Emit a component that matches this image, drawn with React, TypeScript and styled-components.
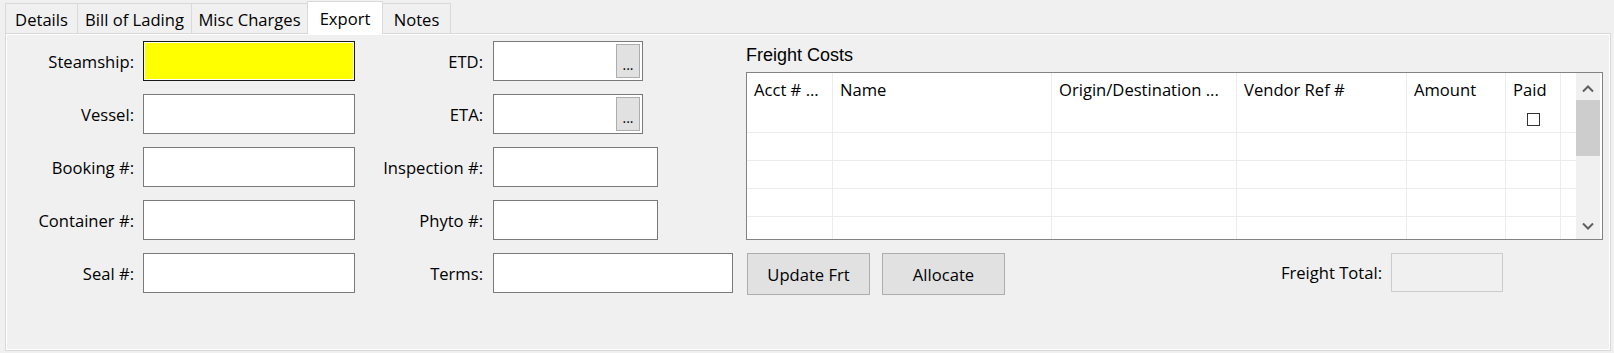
import React from 'react';
import styled, { createGlobalStyle } from 'styled-components';

const GlobalStyle = createGlobalStyle`
  html, body {
    margin: 0;
    padding: 0;
    background: #f0f0f0;
  }
  body {
    font-family: 'Open Sans', 'Noto Sans', sans-serif;
    font-size: 16.6px;
    color: #000;
  }
`;

const Window = styled.div`
  width: 1614px;
  height: 353px;
  box-sizing: border-box;
  padding: 1px 3px 0 5px;
  display: flex;
  flex-direction: column;
`;

const TabStrip = styled.div`
  display: flex;
  align-items: flex-start;
  height: 32px;
`;

const Tab = styled.div<{ $width: number; $active?: boolean }>`
  box-sizing: border-box;
  width: ${p => p.$width}px;
  height: ${p => (p.$active ? 33 : 30)}px;
  margin-top: ${p => (p.$active ? 0 : 2)}px;
  margin-right: -1px;
  padding-top: ${p => (p.$active ? 0 : 2)}px;
  border: 1px solid #d9d9d9;
  border-bottom: none;
  background: ${p => (p.$active ? '#ffffff' : '#f0f0f0')};
  display: flex;
  align-items: center;
  justify-content: center;
  white-space: nowrap;
  position: relative;
  z-index: ${p => (p.$active ? 2 : 1)};
`;

const Panel = styled.div`
  box-sizing: border-box;
  height: 318px;
  border: 1px solid #d9d9d9;
  box-shadow: inset 0 0 0 1px #ffffff;
  background: #f0f0f0;
  display: flex;
  align-items: flex-start;
`;

const FormGrid = styled.div`
  display: grid;
  grid-template-columns: 137px 212px 138px 240px;
  grid-auto-rows: 40px;
  row-gap: 13px;
  padding-top: 7px;
`;

const Label = styled.div<{ $pad: number }>`
  display: flex;
  align-items: center;
  justify-content: flex-end;
  padding-right: ${p => p.$pad}px;
  white-space: nowrap;
`;

const Field = styled.div<{ $width: number; $highlight?: boolean }>`
  box-sizing: border-box;
  width: ${p => p.$width}px;
  height: 40px;
  border: 1px solid ${p => (p.$highlight ? '#1a1a1a' : '#7a7a7a')};
  background: ${p => (p.$highlight ? '#ffff00' : '#ffffff')};
  box-shadow: ${p => (p.$highlight ? 'inset 0 0 0 1px #ffffff' : 'none')};
  display: flex;
  justify-content: flex-end;
  padding: 2px;
`;

const EllipsisButton = styled.div`
  box-sizing: border-box;
  width: 24px;
  height: 34px;
  background: #e1e1e1;
  border: 1px solid #adadad;
  display: flex;
  align-items: center;
  justify-content: center;
  font-size: 14px;
  padding-top: 6px;
`;

const FreightSection = styled.div`
  margin-left: 13px;
  width: 857px;
  padding-top: 11px;
  display: flex;
  flex-direction: column;
`;

const Heading = styled.div`
  font-family: 'Liberation Sans', Arial, sans-serif;
  font-size: 18px;
  line-height: 20px;
  height: 20px;
  margin-bottom: 7px;
`;

const GridBox = styled.div`
  box-sizing: border-box;
  height: 168px;
  border: 1px solid #828282;
  background: #ffffff;
  display: flex;
  padding-right: 2px;
  overflow: hidden;
`;

const Table = styled.div`
  flex: 1;
  display: grid;
  grid-template-columns: 86px 219px 185px 170px 99px 55px 1fr;
  grid-template-rows: 32px repeat(5, 28px);
  overflow: hidden;
`;

const HeaderCell = styled.div<{ $last?: boolean }>`
  box-sizing: border-box;
  border-right: ${p => (p.$last ? 'none' : '1px solid #ececec')};
  padding-left: 7px;
  display: flex;
  align-items: center;
  white-space: nowrap;
  overflow: hidden;
`;

const BodyCell = styled.div<{ $last?: boolean }>`
  box-sizing: border-box;
  border-right: ${p => (p.$last ? 'none' : '1px solid #ececec')};
  border-bottom: 1px solid #ececec;
  display: flex;
  align-items: center;
  justify-content: center;
`;

const CheckBox = styled.div`
  box-sizing: border-box;
  width: 13px;
  height: 13px;
  border: 1px solid #333333;
  background: #ffffff;
  margin-top: 2px;
`;

const ScrollBar = styled.div`
  width: 24px;
  background: #f0f0f0;
  display: flex;
  flex-direction: column;
`;

const ScrollArrow = styled.div<{ $down?: boolean }>`
  height: 27px;
  display: flex;
  align-items: center;
  justify-content: center;
  padding-top: ${p => (p.$down ? 0 : 4)}px;
  box-sizing: border-box;
`;

const ScrollThumb = styled.div`
  height: 56px;
  background: #cdcdcd;
`;

const ScrollTrack = styled.div`
  flex: 1;
`;

const ActionRow = styled.div`
  display: flex;
  align-items: flex-start;
  margin-top: 13px;
  padding-left: 1px;
`;

const Button = styled.div`
  box-sizing: border-box;
  width: 123px;
  height: 42px;
  background: #e1e1e1;
  border: 1px solid #adadad;
  display: flex;
  align-items: center;
  justify-content: center;
  margin-right: 12px;
`;

const TotalLabel = styled.div`
  margin-left: auto;
  height: 39px;
  display: flex;
  align-items: center;
  padding-right: 9px;
`;

const TotalBox = styled.div`
  box-sizing: border-box;
  width: 112px;
  height: 39px;
  border: 1px solid #cccccc;
  background: #f0f0f0;
  margin-right: 100px;
`;

const Chevron: React.FC<{ down?: boolean }> = ({ down }) => (
  <svg width="12" height="8" viewBox="0 0 12 8">
    <path
      d={down ? 'M1 1.5 L6 6.5 L11 1.5' : 'M1 6.5 L6 1.5 L11 6.5'}
      fill="none"
      stroke="#606060"
      strokeWidth="2"
    />
  </svg>
);

const tabs = [
  { name: 'Details', width: 73 },
  { name: 'Bill of Lading', width: 115 },
  { name: 'Misc Charges', width: 117 },
  { name: 'Export', width: 76, active: true },
  { name: 'Notes', width: 69 },
];

const columns = ['Acct # ...', 'Name', 'Origin/Destination ...', 'Vendor Ref #', 'Amount', 'Paid', ''];

const App: React.FC = () => (
  <>
    <GlobalStyle />
    <Window>
      <TabStrip>
        {tabs.map(t => (
          <Tab key={t.name} $width={t.width} $active={t.active}>
            {t.name}
          </Tab>
        ))}
      </TabStrip>
      <Panel>
        <FormGrid>
          <Label $pad={9}>Steamship:</Label>
          <Field $width={212} $highlight />
          <Label $pad={10}>ETD:</Label>
          <Field $width={150}>
            <EllipsisButton>...</EllipsisButton>
          </Field>

          <Label $pad={9}>Vessel:</Label>
          <Field $width={212} />
          <Label $pad={10}>ETA:</Label>
          <Field $width={150}>
            <EllipsisButton>...</EllipsisButton>
          </Field>

          <Label $pad={9}>Booking #:</Label>
          <Field $width={212} />
          <Label $pad={10}>Inspection #:</Label>
          <Field $width={165} />

          <Label $pad={9}>Container #:</Label>
          <Field $width={212} />
          <Label $pad={10}>Phyto #:</Label>
          <Field $width={165} />

          <Label $pad={9}>Seal #:</Label>
          <Field $width={212} />
          <Label $pad={10}>Terms:</Label>
          <Field $width={240} />
        </FormGrid>

        <FreightSection>
          <Heading>Freight Costs</Heading>
          <GridBox>
            <Table>
              {columns.map((c, i) => (
                <HeaderCell key={'h' + i} $last={i === columns.length - 1}>
                  {c}
                </HeaderCell>
              ))}
              {[0, 1, 2, 3, 4].map(r =>
                columns.map((_, i) => (
                  <BodyCell key={r + '-' + i} $last={i === columns.length - 1}>
                    {r === 0 && i === 5 ? <CheckBox /> : null}
                  </BodyCell>
                ))
              )}
            </Table>
            <ScrollBar>
              <ScrollArrow>
                <Chevron />
              </ScrollArrow>
              <ScrollThumb />
              <ScrollTrack />
              <ScrollArrow $down>
                <Chevron down />
              </ScrollArrow>
            </ScrollBar>
          </GridBox>
          <ActionRow>
            <Button>Update Frt</Button>
            <Button>Allocate</Button>
            <TotalLabel>Freight Total:</TotalLabel>
            <TotalBox />
          </ActionRow>
        </FreightSection>
      </Panel>
    </Window>
  </>
);

export default App;
